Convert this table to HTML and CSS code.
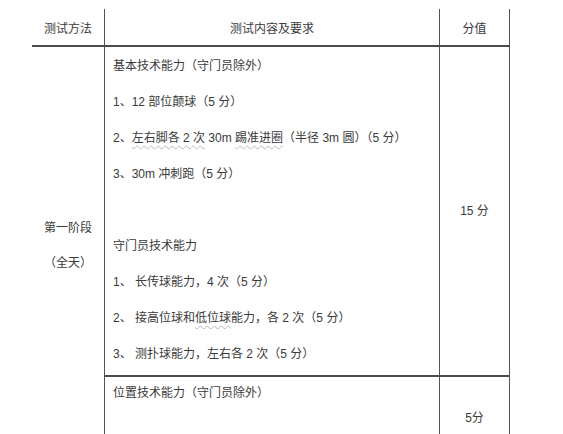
FILE: index.html
```html
<!DOCTYPE html>
<html lang="zh">
<head>
<meta charset="utf-8">
<link rel="stylesheet" href="styles.css">
</head>
<body>
<div class="sheet">
  <div class="cell h c1">测试方法</div>
  <div class="cell h c2">测试内容及要求</div>
  <div class="cell h c3">分值</div>

  <div class="rule"></div>

  <div class="cell c1 stage"><p>第一阶段</p><p>（全天）</p></div>
  <div class="cell c2 items rb">
    <p>基本技术能力（守门员除外）</p>
    <p>1、12 部位颠球（5 分）</p>
    <p>2、<span class="sp">左右脚各 2 次</span> 30m <span class="sp">踢准进圈</span>（半径 3m 圆）（5 分）</p>
    <p>3、30m 冲刺跑（5 分）</p>
    <p>&nbsp;</p>
    <p>守门员技术能力</p>
    <p>1、 长传球能力，4 次（5 分）</p>
    <p>2、 接高位球和<span class="sp">低位球</span>能力，各 2 次（5 分）</p>
    <p>3、 测扑球能力，左右各 2 次（5 分）</p>
  </div>
  <div class="cell c3 score rb">15 分</div>

  <div class="cell c2 items2"><p>位置技术能力（守门员除外）</p></div>
  <div class="cell c3 score2">5分</div>
</div>
</body>
</html>
```
FILE: styles.css
```css
html, body {
  margin: 0;
  background: #fff;
}
body {
  height: 434px;
  overflow: hidden;
  font-family: "Liberation Sans", "Noto Sans CJK SC", sans-serif;
  font-size: 12px;
  color: #3a3a3a;
}
.sheet {
  display: grid;
  grid-template-columns: 72px 336px 70px;
  grid-template-rows: 36px 2px 330px 84px;
  margin: 9px 0 0 32px;
  width: 478px;
}
.cell {
  box-sizing: border-box;
}
.cell p { margin: 0; }
.c1 { grid-column: 1; }
.c2 { grid-column: 2; border-left: 1px solid #555; border-right: 1px solid #555; }
.c3 { grid-column: 3; border-right: 1px solid #555; }
.h {
  grid-row: 1;
  display: flex;
  align-items: center;
  justify-content: center;
}
.rule {
  grid-row: 2;
  grid-column: 1 / 4;
  background: #4a4a4a;
}
.rb { border-bottom: 2px solid #4a4a4a; }
.stage {
  grid-row: 3 / 5;
  text-align: center;
  padding-top: 164px;
  line-height: 35px;
}
.items {
  grid-row: 3;
  padding: 1px 0 0 8px;
  line-height: 36px;
}
.score {
  grid-row: 3;
  display: flex;
  align-items: center;
  justify-content: center;
  padding-bottom: 4px;
}
.items2 {
  grid-row: 4;
  padding-left: 8px;
  line-height: 32px;
}
.score2 {
  grid-row: 4;
  text-align: center;
  padding-top: 33px;
  line-height: 16px;
}
.sp {
  text-decoration: underline wavy #b8b8b8 1px;
  text-underline-offset: 3px;
}
```
